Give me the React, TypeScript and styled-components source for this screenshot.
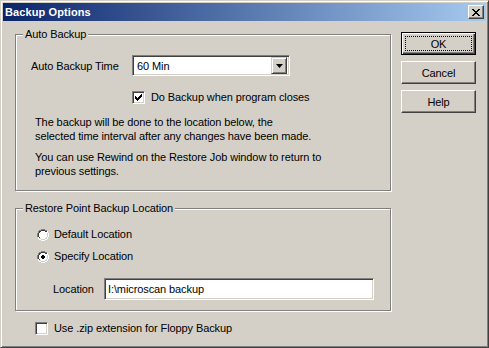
import styled, { createGlobalStyle } from "styled-components";

const GlobalStyle = createGlobalStyle`
  html, body {
    margin: 0;
    padding: 0;
    background: #d4d0c8;
  }
  * {
    box-sizing: border-box;
  }
`;

export default function App() {
  return (
    <>
      <GlobalStyle />
      <Window>
        <TitleBar>
          <Title>Backup Options</Title>
          <CloseButton>
            <svg width="8" height="7" viewBox="0 0 8 7">
              <path
                d="M0 0h2v1h1v1h2V1h1V0h2v1H7v1H6v1H5v1h1v1h1v1h1v1H6V6H5V5H3v1H2v1H0V6h1V5h1V4h1V3H2V2H1V1H0z"
                fill="#000"
              />
            </svg>
          </CloseButton>
        </TitleBar>

        <Body>
          <MainColumn>
            <GroupBox $height={157}>
              <GroupLabel>Auto Backup</GroupLabel>
              <Row $top={20} $left={15}>
                <FieldLabel $width={101}>Auto Backup Time</FieldLabel>
                <Select>
                  <SelectValue>60 Min</SelectValue>
                  <DropButton>
                    <svg width="7" height="4" viewBox="0 0 7 4">
                      <path d="M0 0h7L3.5 4z" fill="#000" />
                    </svg>
                  </DropButton>
                </Select>
              </Row>
              <CheckRow $top={15} $left={116}>
                <CheckBox>
                  <svg width="7" height="7" viewBox="0 0 7 7">
                    <path d="M0 2h1v1h1v1h1V3h1V2h1V1h1V0h1v3H6v1H5v1H4v1H3v1H2V6H1V5H0z" fill="#000" />
                  </svg>
                </CheckBox>
                <Text>Do Backup when program closes</Text>
              </CheckRow>
              <Paragraph $top={12}>
                The backup will be done to the location below, the
                <br />
                selected time interval after any changes have been made.
              </Paragraph>
              <Paragraph $top={8}>
                You can use Rewind on the Restore Job window to return to
                <br />
                previous settings.
              </Paragraph>
            </GroupBox>

            <GroupBox $height={103} $gap={17}>
              <GroupLabel>Restore Point Backup Location</GroupLabel>
              <RadioRow $top={19}>
                <Radio checked={false} />
                <Text>Default Location</Text>
              </RadioRow>
              <RadioRow $top={9}>
                <Radio checked />
                <Text>Specify Location</Text>
              </RadioRow>
              <Row $top={15} $left={37}>
                <FieldLabel $width={51}>Location</FieldLabel>
                <TextInput>I:\microscan backup</TextInput>
              </Row>
            </GroupBox>

            <CheckRow $top={11} $left={20}>
              <CheckBox />
              <Text>Use .zip extension for Floppy Backup</Text>
            </CheckRow>
          </MainColumn>

          <ButtonColumn>
            <DefaultButton>
              <FocusRect>OK</FocusRect>
            </DefaultButton>
            <Button>Cancel</Button>
            <Button>Help</Button>
          </ButtonColumn>
        </Body>
      </Window>
    </>
  );
}

function Radio({ checked }: { checked: boolean }) {
  return (
    <RadioBox width="12" height="12" viewBox="0 0 12 12">
      <path d="M4 0h4v1h2v1h1v2h1v4h-1v2h-1v1H8v1H4v-1H2v-1H1V8H0V4h1V2h1V1h2z" fill="#fff" />
      <path d="M4 0h4v1H4zM2 1h2v1H2zM8 1h2v1H8zM1 2h1v2H1zM0 4h1v4H0z" fill="#808080" />
      <path d="M4 1h4v1H4zM2 2h2v1H2zM8 2h2v1H8zM2 3h1v1H2zM1 4h1v4H1zM2 8h1v1H2z" fill="#404040" />
      <path d="M11 4h1v4h-1zM10 8h1v2h-1zM8 10h2v1H8zM4 11h4v1H4zM2 10h2v1H2zM1 8h1v2H1z" fill="#fff" />
      <path d="M10 4h1v4h-1zM9 8h1v1H9zM8 9h2v1H8zM4 10h4v1H4zM2 9h2v1H2z" fill="#d4d0c8" />
      {checked && <path d="M5 4h2v1h1v2H7v1H5V7H4V5h1z" fill="#000" />}
    </RadioBox>
  );
}

const Window = styled.div`
  width: 489px;
  height: 348px;
  border: 1px solid;
  border-color: #d4d0c8 #404040 #404040 #d4d0c8;
  box-shadow: inset 1px 1px 0 #fff, inset -1px -1px 0 #808080;
  padding: 2px;
  background: #d4d0c8;
  font-family: "Liberation Sans", Arial, sans-serif;
  font-size: 11px;
  letter-spacing: -0.1px;
  color: #000;
`;

const TitleBar = styled.div`
  height: 18px;
  display: flex;
  align-items: center;
  justify-content: space-between;
  padding: 0 2px 0 2px;
  background: linear-gradient(to right, #0a246a, #a6caf0);
`;

const Title = styled.span`
  color: #fff;
  font-weight: bold;
  font-size: 11px;
  letter-spacing: 0.1px;
`;

const CloseButton = styled.div`
  width: 16px;
  height: 14px;
  display: flex;
  align-items: center;
  justify-content: center;
  background: #d4d0c8;
  border: 1px solid;
  border-color: #fff #404040 #404040 #fff;
  box-shadow: inset -1px -1px 0 #808080;
`;

const Body = styled.div`
  display: flex;
  gap: 11px;
  padding: 13px 0 0 12px;
`;

const MainColumn = styled.div`
  width: 375px;
  display: flex;
  flex-direction: column;
`;

const GroupBox = styled.div<{ $height: number; $gap?: number }>`
  position: relative;
  height: ${(p) => p.$height}px;
  margin-top: ${(p) => p.$gap ?? 0}px;
  margin-right: -1px;
  border: 1px solid #808080;
  box-shadow: inset 1px 1px 0 #fff, 1px 1px 0 #fff;
  display: flex;
  flex-direction: column;
`;

const GroupLabel = styled.span`
  position: absolute;
  top: -7px;
  left: 7px;
  padding: 0 2px;
  background: #d4d0c8;
  line-height: 13px;
`;

const Row = styled.div<{ $top: number; $left: number }>`
  display: flex;
  align-items: center;
  margin-top: ${(p) => p.$top}px;
  padding-left: ${(p) => p.$left}px;
`;

const FieldLabel = styled.span<{ $width: number }>`
  width: ${(p) => p.$width}px;
  flex-shrink: 0;
`;

const Sunken = styled.div`
  height: 21px;
  background: #fff;
  border: 1px solid;
  border-color: #808080 #fff #fff #808080;
  box-shadow: inset 1px 1px 0 #404040, inset -1px -1px 0 #d4d0c8;
  display: flex;
  align-items: center;
`;

const Select = styled(Sunken)`
  width: 158px;
  padding: 2px;
  justify-content: space-between;
`;

const SelectValue = styled.span`
  padding-left: 2px;
`;

const DropButton = styled.div`
  width: 16px;
  height: 17px;
  display: flex;
  align-items: center;
  justify-content: center;
  background: #d4d0c8;
  border: 1px solid;
  border-color: #d4d0c8 #404040 #404040 #d4d0c8;
  box-shadow: inset 1px 1px 0 #fff, inset -1px -1px 0 #808080;
`;

const TextInput = styled(Sunken)`
  width: 270px;
  height: 22px;
  padding-left: 3px;
`;

const CheckRow = styled.div<{ $top: number; $left: number }>`
  display: flex;
  align-items: center;
  gap: 6px;
  margin-top: ${(p) => p.$top}px;
  padding-left: ${(p) => p.$left}px;
  line-height: 13px;
`;

const CheckBox = styled.div`
  width: 13px;
  height: 13px;
  background: #fff;
  border: 1px solid;
  border-color: #808080 #fff #fff #808080;
  box-shadow: inset 1px 1px 0 #404040, inset -1px -1px 0 #d4d0c8;
  display: flex;
  align-items: center;
  justify-content: center;
`;

const Text = styled.span`
  white-space: nowrap;
`;

const Paragraph = styled.p<{ $top: number }>`
  margin: ${(p) => p.$top}px 0 0;
  padding-left: 19px;
  line-height: 13.5px;
`;

const RadioRow = styled.div<{ $top: number }>`
  display: flex;
  align-items: center;
  gap: 5px;
  margin-top: ${(p) => p.$top}px;
  padding-left: 21px;
  line-height: 13px;
`;

const RadioBox = styled.svg`
  flex-shrink: 0;
  shape-rendering: crispEdges;
`;

const ButtonColumn = styled.div`
  display: flex;
  flex-direction: column;
  gap: 6px;
  margin-top: -2px;
`;

const Button = styled.div`
  width: 75px;
  height: 23px;
  display: flex;
  align-items: center;
  justify-content: center;
  background: #d4d0c8;
  border: 1px solid;
  border-color: #fff #404040 #404040 #fff;
  box-shadow: inset -1px -1px 0 #808080;
`;

const DefaultButton = styled(Button)`
  border-color: #000;
  box-shadow: inset 1px 1px 0 #fff, inset -1px -1px 0 #404040, inset -2px -2px 0 #808080;
  padding: 3px;
`;

const FocusRect = styled.div`
  width: 100%;
  height: 100%;
  border: 1px dotted #000;
  display: flex;
  align-items: center;
  justify-content: center;
`;
